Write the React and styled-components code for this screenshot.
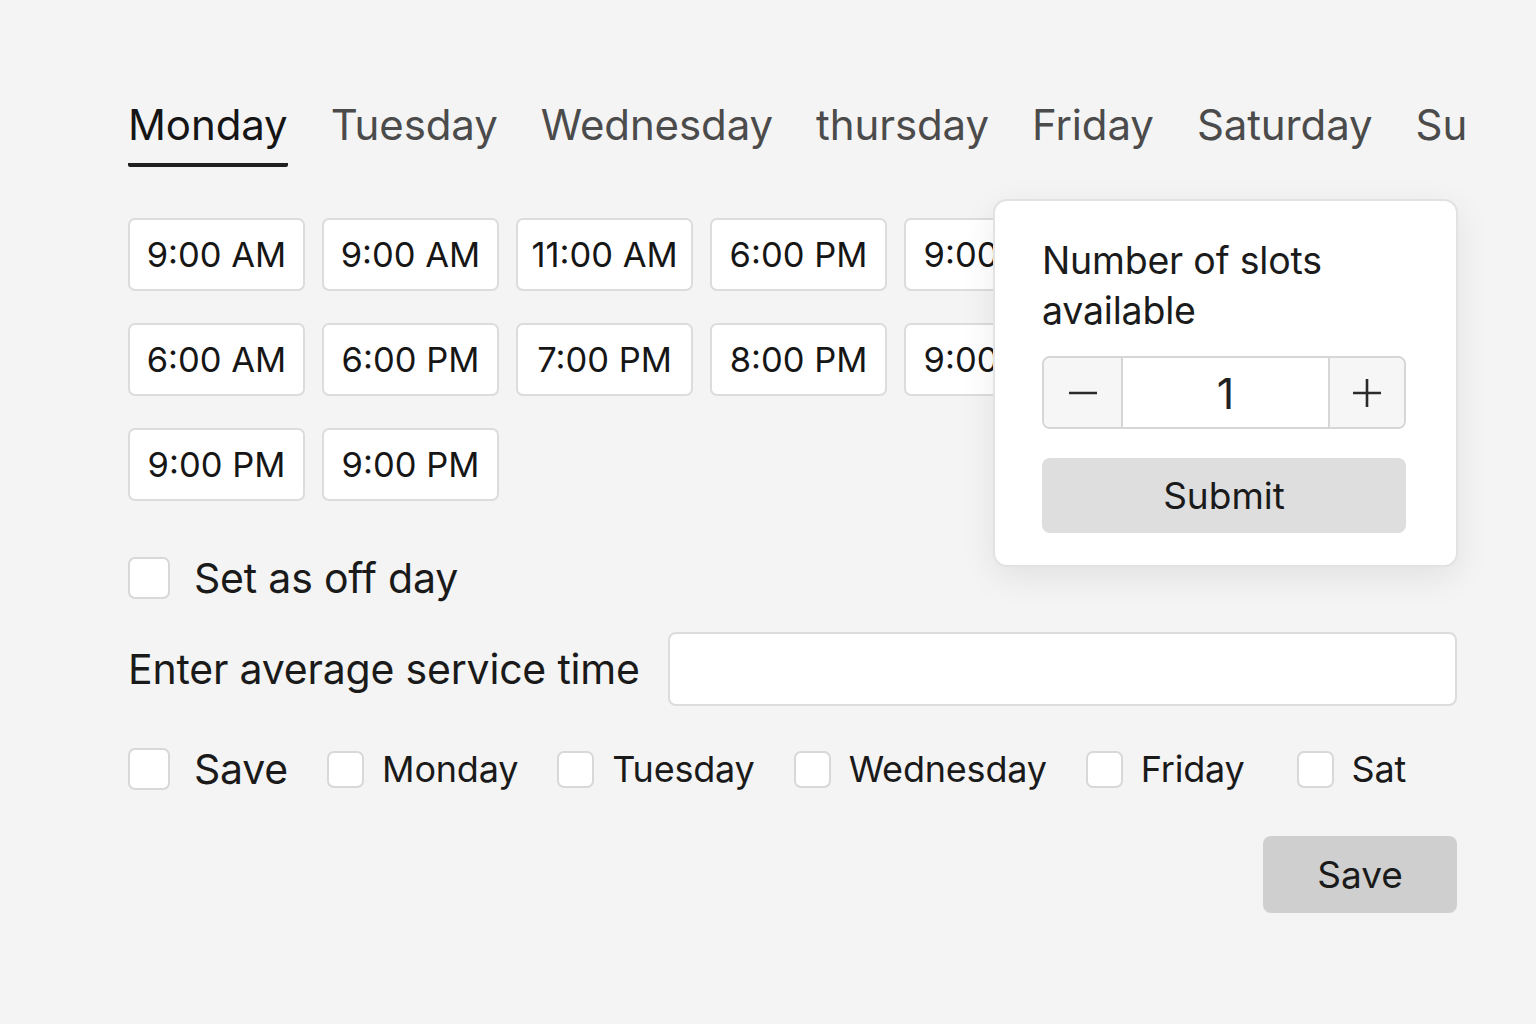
import styled, { createGlobalStyle } from "styled-components"

const GlobalStyle = createGlobalStyle`
    body {
        margin: 0;
        background: #f4f4f4;
        font-family: Inter, "Noto Sans", "Liberation Sans", sans-serif;
        color: #1a1a1a;
    }
    * { box-sizing: border-box; }
`
const Page = styled.div`
    min-height: 1024px;
    padding: 100px 0 0 128px;
`
const Container = styled.div`
    position: relative;
    width: 1329px;
`
const Tabs = styled.div`
    display: flex;
    gap: 43px;
    width: 1339px;
    overflow: hidden;
    white-space: nowrap;
`
const Tab = styled.div`
    font-size: 42px;
    line-height: 50px;
    letter-spacing: -0.1px;
    padding-bottom: 13px;
    color: ${props => props.active ? "#151515" : "#4b4b4b"};
    border-bottom: 4px solid ${props => props.active ? "#1f1f1f" : "transparent"};
    border-radius: 2px;
    flex-shrink: 0;
`
const Slots = styled.div`
    display: grid;
    grid-template-columns: repeat(6, 177px);
    column-gap: 17px;
    row-gap: 32px;
    margin-top: 51px;
`
const Slot = styled.div`
    height: 73px;
    display: flex;
    align-items: center;
    justify-content: center;
    background: #fff;
    border: 2px solid #dcdcdc;
    border-radius: 7px;
    font-size: 34.5px;
    color: #161616;
`
const CheckRow = styled.label`
    display: flex;
    align-items: center;
    gap: ${props => props.gap || 24}px;
    font-size: ${props => props.size || 41}px;
    line-height: 1;
    letter-spacing: -0.2px;
    color: #1a1a1a;
    margin-top: ${props => props.top || 0}px;
    margin-left: ${props => props.push || 0}px;
`
const Box = styled.span`
    display: inline-block;
    width: ${props => props.dim || 42}px;
    height: ${props => props.dim || 42}px;
    background: #fff;
    border: 2px solid #d8d8d8;
    border-radius: 7px;
    flex-shrink: 0;
`
const ServiceRow = styled.div`
    display: flex;
    align-items: center;
    gap: 28px;
    margin-top: 33px;
`
const ServiceLabel = styled.div`
    font-size: 41px;
    letter-spacing: -0.2px;
    white-space: nowrap;
`
const TextInput = styled.div`
    flex: 1;
    height: 74px;
    background: #fff;
    border: 2px solid #dcdcdc;
    border-radius: 8px;
`
const DaysRow = styled.div`
    display: flex;
    align-items: center;
    gap: 39px;
    margin-top: 42px;
`
const Footer = styled.div`
    display: flex;
    justify-content: flex-end;
    margin-top: 46px;
`
const SaveButton = styled.button`
    width: 194px;
    height: 77px;
    border: none;
    border-radius: 8px;
    background: #cfcfcf;
    font-family: inherit;
    font-size: 37px;
    color: #1a1a1a;
`
const Popover = styled.div`
    position: absolute;
    top: 99px;
    right: -1px;
    width: 465px;
    padding: 35px 50px 32px 47px;
    background: #fff;
    border: 2px solid #e2e2e2;
    border-radius: 14px;
    box-shadow: 0 10px 34px rgba(0, 0, 0, 0.08);
`
const PopTitle = styled.div`
    font-size: 37.5px;
    line-height: 50px;
    letter-spacing: -0.2px;
    color: #1b1b1b;
`
const Stepper = styled.div`
    display: flex;
    height: 73px;
    margin-top: 20px;
    border: 2px solid #d6d6d6;
    border-radius: 8px;
    overflow: hidden;
`
const StepButton = styled.div`
    width: ${props => props.w}px;
    display: flex;
    align-items: center;
    justify-content: center;
    background: #f6f6f6;
    border-left: ${props => props.side === "right" ? "2px solid #d6d6d6" : "none"};
    border-right: ${props => props.side === "left" ? "2px solid #d6d6d6" : "none"};
`
const StepValue = styled.div`
    flex: 1;
    display: flex;
    align-items: center;
    justify-content: center;
    font-size: 43px;
    color: #222;
    background: #fff;
`
const SubmitButton = styled.button`
    display: block;
    width: 100%;
    height: 75px;
    margin-top: 29px;
    border: none;
    border-radius: 8px;
    background: #dedede;
    font-family: inherit;
    font-size: 37px;
    color: #1a1a1a;
`

const days = ["Monday", "Tuesday", "Wednesday", "thursday", "Friday", "Saturday", "Sunday"]
const slots = [
    "9:00 AM", "9:00 AM", "11:00 AM", "6:00 PM", "9:00 PM", "9:00 PM",
    "6:00 AM", "6:00 PM", "7:00 PM", "8:00 PM", "9:00 PM", "9:00 PM",
    "9:00 PM", "9:00 PM",
]
const copyDays = ["Monday", "Tuesday", "Wednesday", "Friday", "Sat"]

function MinusIcon() {
    return (
        <svg width="30" height="30" viewBox="0 0 30 30">
            <line x1="1" y1="15" x2="29" y2="15" stroke="#2a2a2a" strokeWidth="2.6" />
        </svg>
    )
}

function PlusIcon() {
    return (
        <svg width="30" height="30" viewBox="0 0 30 30">
            <line x1="1" y1="15" x2="29" y2="15" stroke="#2a2a2a" strokeWidth="2.6" />
            <line x1="15" y1="1" x2="15" y2="29" stroke="#2a2a2a" strokeWidth="2.6" />
        </svg>
    )
}

export default function App() {
    return (
        <Page>
            <GlobalStyle />
            <Container>
                <Tabs>
                    {days.map((d, i) => <Tab key={d} active={i === 0}>{d}</Tab>)}
                </Tabs>

                <Slots>
                    {slots.map((s, i) => <Slot key={i}>{s}</Slot>)}
                </Slots>

                <CheckRow top={56}>
                    <Box />
                    Set as off day
                </CheckRow>

                <ServiceRow>
                    <ServiceLabel>Enter average service time</ServiceLabel>
                    <TextInput />
                </ServiceRow>

                <DaysRow>
                    <CheckRow>
                        <Box />
                        Save
                    </CheckRow>
                    {copyDays.map((d, i) => (
                        <CheckRow key={d} gap={18} size={36} push={i === copyDays.length - 1 ? 13 : 0}>
                            <Box dim={37} />
                            {d}
                        </CheckRow>
                    ))}
                </DaysRow>

                <Footer>
                    <SaveButton>Save</SaveButton>
                </Footer>

                <Popover>
                    <PopTitle>Number of slots<br />available</PopTitle>
                    <Stepper>
                        <StepButton w={79} side="left"><MinusIcon /></StepButton>
                        <StepValue>1</StepValue>
                        <StepButton w={76} side="right"><PlusIcon /></StepButton>
                    </Stepper>
                    <SubmitButton>Submit</SubmitButton>
                </Popover>
            </Container>
        </Page>
    )
}
